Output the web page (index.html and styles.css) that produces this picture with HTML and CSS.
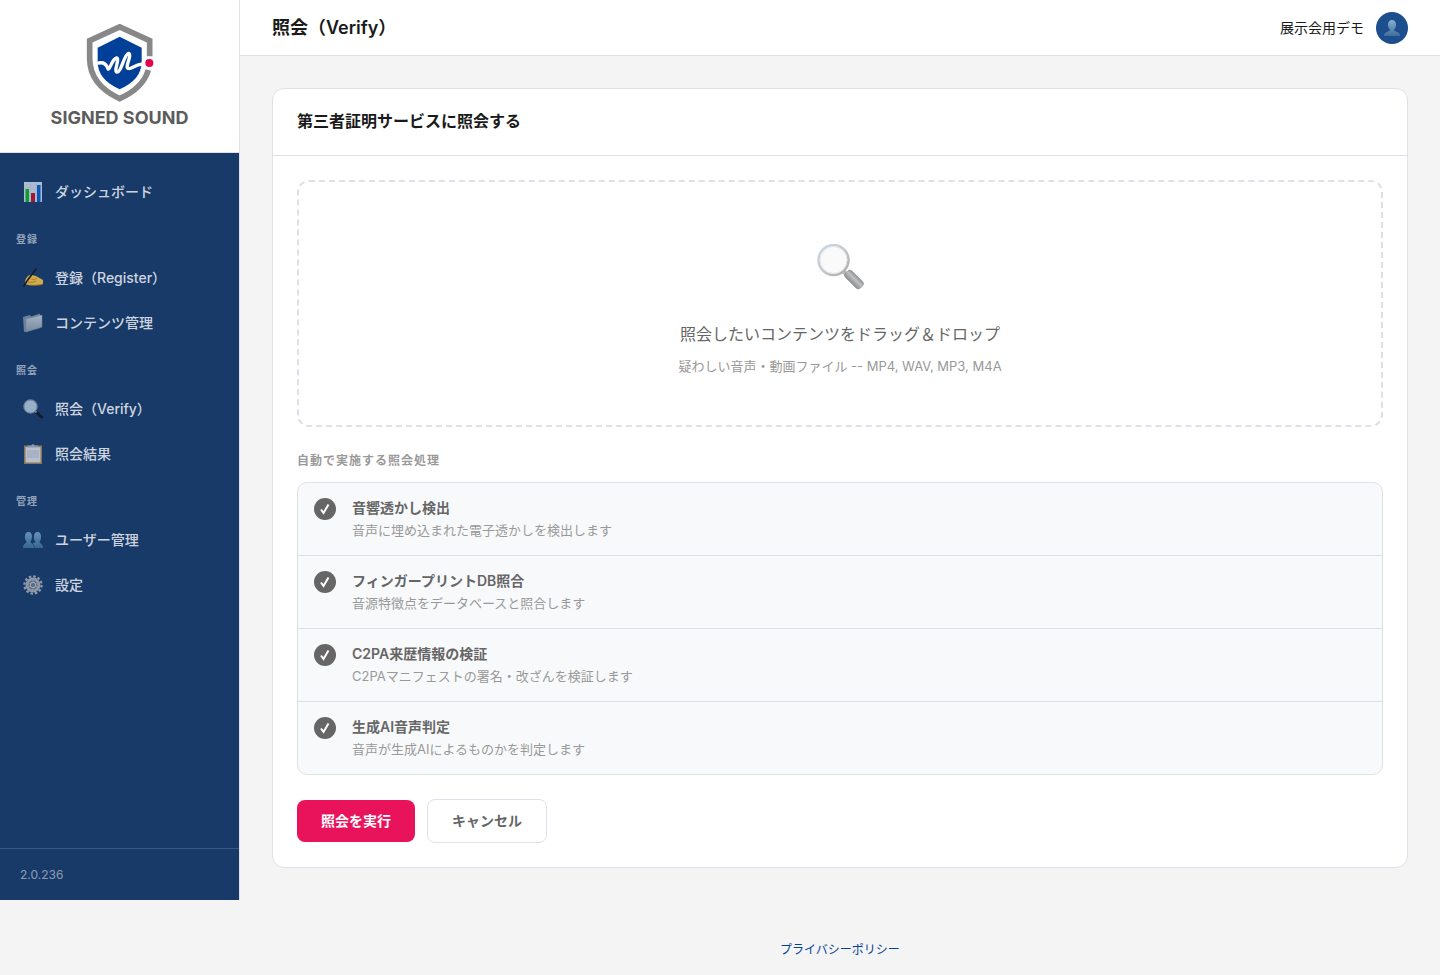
FILE: index.html
```html
<!DOCTYPE html>
<html lang="ja">

<head>
  <meta charset="UTF-8">
  <meta name="viewport" content="width=device-width, initial-scale=1.0">
  <title>照会（Verify） | SIGNED SOUND</title>
  <link rel="stylesheet" href="styles.css">
</head>

<body>
  <div class="layout">
    <aside class="sidebar">
      <a class="logo" href="#">
        <svg class="logo__mark" viewBox="120 42 240 234" aria-hidden="true">
          <path d="M329 139V92L239 50.500 149 92v53c0 56 31 94 90 121 46-21 75-48 86-86" fill="none" stroke="#888" stroke-width="17" />
          <path d="M239 80l66 33v42c0 37-23 63-66 83-43-20-66-46-66-83v-42z" fill="#004098" />
          <path d="M176 159c14-3 22 3 26 13 6 20 12-26 28-28 10 2-10 40 1 42 13 2 21-54 35-56 11 4-12 42-2 45 10 5 20-12 44-13" fill="none" stroke="#fff" stroke-width="10" stroke-linecap="round" stroke-linejoin="round" />
          <circle cx="328" cy="159" r="12" fill="#e6004d" />
        </svg>
        <span class="logo__name">SIGNED SOUND</span>
      </a>

      <nav class="nav">
        <a class="nav__item" href="#">
          <svg class="nav__icon" viewBox="0 0 20 20" aria-hidden="true">
            <path d="M1 0h18v20H1z" fill="#d3deeb" />
            <path d="M1 3h18M1 6h18M7.500 0v20M13 0v20" stroke="#c2cedb" stroke-width=".6" />
            <path d="M2.500 7H6v13H2.500z" fill="#09b51c" />
            <path d="M8 11h4v9H8z" fill="#c80f24" />
            <path d="M14 3h3.500v17H14z" fill="#075fd0" />
          </svg>
          ダッシュボード
        </a>

        <h2 class="nav__title">登録</h2>
        <a class="nav__item" href="#">
          <svg class="nav__icon" viewBox="0 0 20 20" aria-hidden="true">
            <path d="M2 15c0-4 2-7 5-8 3-1 3 1 6 1l7 4v4c-2 1-4 1-6 1H6c-2 0-4-1-4-2z" fill="#ffc944" />
            <path d="M8 11c3 1 4 0 6-1M5 14c3 1 6 0 8-1" fill="none" stroke="#bc781c" stroke-width=".8" />
            <path d="M6 17c5 .6 10 .4 14-1" fill="none" stroke="#c67b16" />
            <path d="M13 1L4 13l-3 5" fill="none" stroke="#171717" stroke-width="1.600" stroke-linecap="round" />
          </svg>
          登録（Register）
        </a>
        <a class="nav__item" href="#">
          <svg class="nav__icon" viewBox="0 0 20 20" aria-hidden="true">
            <path d="M0 4l7-2 1 1.500 9-3V15L1 19z" fill="#8194a6" />
            <path d="M3 6l16-4v12L3 19z" fill="url(#folder)" stroke="#8797a7" stroke-width=".5" />
            <defs>
              <linearGradient id="folder" x2="0" y2="1">
                <stop stop-color="#c8d2dc" />
                <stop offset="1" stop-color="#8e9dad" />
              </linearGradient>
            </defs>
          </svg>
          コンテンツ管理
        </a>

        <h2 class="nav__title">照会</h2>
        <a class="nav__item" href="#">
          <svg class="nav__icon" viewBox="0 0 20 20" aria-hidden="true">
            <path d="M12.500 12.500L18.500 18" stroke="#11151c" stroke-width="3" stroke-linecap="round" />
            <path d="M11 11l2.500 2.500" stroke="#8a8f96" stroke-width="2" />
            <circle cx="7.500" cy="7.500" r="6.600" fill="#b9cde3" stroke="#8c98a8" stroke-width="1.200" />
          </svg>
          照会（Verify）
        </a>
        <a class="nav__item" href="#">
          <svg class="nav__icon" viewBox="0 0 20 20" aria-hidden="true">
            <path d="M1 1.500h18V20H1z" fill="#a9834f" />
            <path d="M2.500 3h15v15.500h-15z" fill="#dfe2e8" />
            <path d="M4 6h12v8H4z" fill="#cdd1da" />
            <path d="M3.500 3.500L5 1.500h3.500C8.500-.2 11.500-.2 11.500 1.500H15l1.500 2z" fill="#a3b0c2" />
          </svg>
          照会結果
        </a>

        <h2 class="nav__title">管理</h2>
        <a class="nav__item" href="#">
          <svg class="nav__icon" viewBox="0 0 20 20" aria-hidden="true">
            <g fill="url(#people)">
              <path d="M5.500 2C8 2 9.200 4 9 7c-.1 2-.8 3.500-1.500 4.500 0 2 3 1.500 3.500 5.500v1H0v-1c.4-3.500 3.600-3.500 3.600-5.500C2.500 10.500 2 9 1.900 7 1.800 4 3 2 5.500 2z" />
              <path d="M14.500 2C17 2 18.200 4 18.100 7c-.1 2-.6 3.500-1.700 4.500 0 2 3.200 2 3.600 5.500v1h-8.500v-1c-.2-2.500-1.700-3-1.500-4 1-.5 2.500-.5 2.500-1.500C11.500 10.500 11 9 10.900 7 10.800 4 12 2 14.500 2z" />
            </g>
            <defs>
              <linearGradient id="people" x2="0" y2="1">
                <stop stop-color="#79a9cc" />
                <stop offset="1" stop-color="#416f9f" />
              </linearGradient>
            </defs>
          </svg>
          ユーザー管理
        </a>
        <a class="nav__item" href="#">
          <svg class="nav__icon" viewBox="0 0 20 20" aria-hidden="true">
            <circle cx="10" cy="10" r="8.600" fill="none" stroke="#aeb5be" stroke-width="2.200" stroke-dasharray="2.500 2" />
            <circle cx="10" cy="10" r="6" fill="#6c737c" stroke="#a8afb8" stroke-width="3" />
            <circle cx="10" cy="10" r="2.800" fill="#667c96" stroke="#cdd3da" />
            <path d="M10 5v2.500M10 12.500V15M5.500 8l2 1M12.500 11l2 1M5.500 12l2-1M12.500 9l2-1" stroke="#a8afb8" stroke-width=".8" />
          </svg>
          設定
        </a>
      </nav>

      <p class="sidebar__version">2.0.236</p>
    </aside>

    <div class="page">
      <header class="header">
        <h1 class="header__title">照会（Verify）</h1>
        <div class="user">
          <span>展示会用デモ</span>
          <span class="user__avatar">
            <svg viewBox="0 0 16 16" width="16" height="16" aria-hidden="true">
              <path d="M8 0c2.800 0 4.200 2 4 5-.1 2-.9 3.700-2 4.700 0 2.300 6 1.800 6 5.800v.5H0v-.5c0-4 6-3.500 6-5.800C4.900 8.700 4.100 7 4 5c-.2-3 1.200-5 4-5z" fill="url(#bust)" />
              <defs>
                <linearGradient id="bust" x2="0" y2="1">
                  <stop stop-color="#82b0d0" />
                  <stop offset="1" stop-color="#416d9d" />
                </linearGradient>
              </defs>
            </svg>
          </span>
        </div>
      </header>

      <main class="content">
        <form class="card">
          <h2 class="card__title">第三者証明サービスに照会する</h2>

          <div class="card__body">
            <label class="dropzone" for="file">
              <input class="dropzone__input" type="file" id="file" name="file" accept=".mp4,.wav,.mp3,.m4a">
              <svg class="dropzone__icon" viewBox="0 0 48 48" aria-hidden="true">
                <defs>
                  <linearGradient id="ring" x2="1" y2="1">
                    <stop stop-color="#c5d9ee" />
                    <stop offset=".45" stop-color="#c8cbce" />
                    <stop offset="1" stop-color="#aaa" />
                  </linearGradient>
                  <linearGradient id="handle" x2="0" y2="1">
                    <stop stop-color="#929496" />
                    <stop offset=".4" stop-color="#bfc1c3" />
                    <stop offset="1" stop-color="#8a8c8e" />
                  </linearGradient>
                </defs>
                <path d="M27 27l4 4" stroke="#b5b7b9" stroke-width="4" />
                <rect x="27.500" y="31" width="21" height="9" rx="3" fill="url(#handle)" stroke="#96989a" stroke-width=".8" transform="rotate(45 38 35.500)" />
                <circle cx="17.500" cy="16" r="15" fill="#fafafa" stroke="url(#ring)" stroke-width="2.500" />
                <circle cx="17.500" cy="16" r="13.500" fill="none" stroke="#e5e5e5" />
              </svg>
              <span class="dropzone__text">照会したいコンテンツをドラッグ＆ドロップ</span>
              <span class="dropzone__hint">疑わしい音声・動画ファイル -- MP4, WAV, MP3, M4A</span>
            </label>

            <h3 class="checks-title">自動で実施する照会処理</h3>
            <ul class="checks">
              <li class="checks__item">
                <svg class="checks__icon" viewBox="0 0 22 22" aria-hidden="true"><path d="M7 11.500l2.500 3.500L14.500 6.500" /></svg>
                <div>
                  <p class="checks__name">音響透かし検出</p>
                  <p class="checks__text">音声に埋め込まれた電子透かしを検出します</p>
                </div>
              </li>
              <li class="checks__item">
                <svg class="checks__icon" viewBox="0 0 22 22" aria-hidden="true"><path d="M7 11.500l2.500 3.500L14.500 6.500" /></svg>
                <div>
                  <p class="checks__name">フィンガープリントDB照合</p>
                  <p class="checks__text">音源特徴点をデータベースと照合します</p>
                </div>
              </li>
              <li class="checks__item">
                <svg class="checks__icon" viewBox="0 0 22 22" aria-hidden="true"><path d="M7 11.500l2.500 3.500L14.500 6.500" /></svg>
                <div>
                  <p class="checks__name">C2PA来歴情報の検証</p>
                  <p class="checks__text">C2PAマニフェストの署名・改ざんを検証します</p>
                </div>
              </li>
              <li class="checks__item">
                <svg class="checks__icon" viewBox="0 0 22 22" aria-hidden="true"><path d="M7 11.500l2.500 3.500L14.500 6.500" /></svg>
                <div>
                  <p class="checks__name">生成AI音声判定</p>
                  <p class="checks__text">音声が生成AIによるものかを判定します</p>
                </div>
              </li>
            </ul>

            <div class="actions">
              <button class="button button--primary" type="submit">照会を実行</button>
              <button class="button button--secondary" type="button">キャンセル</button>
            </div>
          </div>
        </form>
      </main>
    </div>
  </div>

  <footer class="footer">
    <a class="footer__link" href="#">プライバシーポリシー</a>
  </footer>
</body>

</html>
```
FILE: styles.css
```css
* {
  box-sizing: border-box;
}

body {
  display: flex;
  flex-direction: column;
  min-height: 100vh;
  margin: 0;
  background-color: #f4f4f4;
  color: #1a1a1a;
  font-family: Inter, "Noto Sans CJK JP", sans-serif;
  font-size: 14px;
  line-height: 22px;
}

h1,
h2,
h3,
p,
ul {
  margin: 0;
  padding: 0;
}

a {
  text-decoration: none;
}

.layout {
  display: flex;
  flex: 1;
}

/* Sidebar */

.sidebar {
  display: flex;
  flex: none;
  flex-direction: column;
  width: 240px;
  border-right: 1px solid #e0e0ea;
  background-color: #173a69;
}

.logo {
  display: flex;
  flex-direction: column;
  align-items: center;
  gap: 5px;
  padding: 24px 0 23px;
  border-bottom: 1px solid #e0e0ea;
  background-color: #fff;
  color: #5c5c5c;
}

.logo__mark {
  width: 80px;
  height: 78px;
}

.logo__name {
  font-size: 18px;
  font-weight: 700;
}

.nav {
  flex: 1;
  padding: 17px 8px;
}

.nav__title {
  padding: 16px 8px 9px;
  color: rgba(255, 255, 255, 0.55);
  font-size: 10px;
  font-weight: 600;
  letter-spacing: 1px;
  line-height: 16px;
}

.nav__item {
  display: flex;
  align-items: center;
  gap: 12px;
  margin-bottom: 2px;
  padding: 12px 15px;
  border-radius: 8px;
  color: rgba(255, 255, 255, 0.8);
  font-weight: 500;
  line-height: 19px;
}

.nav__item:hover {
  background-color: rgba(255, 255, 255, 0.08);
}

.nav__icon {
  flex: none;
  width: 20px;
  height: 20px;
  margin: -1px 0;
  opacity: 0.8;
}

.sidebar__version {
  padding: 16px 20px;
  border-top: 1px solid rgba(255, 255, 255, 0.15);
  color: rgba(255, 255, 255, 0.5);
  font-size: 12px;
  line-height: 19px;
}

/* Header */

.page {
  flex: 1;
  min-width: 0;
}

.header {
  display: flex;
  align-items: center;
  justify-content: space-between;
  padding: 12px 32px 11px;
  border-bottom: 1px solid #e0e0ea;
  background-color: #fff;
}

.header__title {
  font-size: 18px;
  font-weight: 600;
}

.user {
  display: flex;
  align-items: center;
  gap: 12px;
}

.user__avatar {
  display: flex;
  align-items: center;
  justify-content: center;
  width: 32px;
  height: 32px;
  border-radius: 50%;
  background-color: #1d4f8f;
}

/* Card */

.content {
  padding: 32px;
}

.card {
  border: 1px solid #e0e0ea;
  border-radius: 12px;
  background-color: #fff;
}

.card__title {
  padding: 19px 24px 21px;
  border-bottom: 1px solid #e0e0ea;
  font-size: 16px;
  font-weight: 600;
  line-height: 26px;
}

.card__body {
  padding: 24px;
}

.dropzone {
  display: flex;
  flex-direction: column;
  align-items: center;
  padding: 48px;
  border: 2px dashed #e0e0ea;
  border-radius: 12px;
  text-align: center;
  cursor: pointer;
}

.dropzone:hover,
.dropzone:focus-within {
  border-color: #173a69;
}

.dropzone__input {
  position: absolute;
  width: 1px;
  height: 1px;
  opacity: 0;
}

.dropzone__icon {
  width: 48px;
  height: 48px;
  margin: 14px 0 30px;
}

.dropzone__text {
  margin-bottom: 10px;
  color: #666;
  font-size: 16px;
  line-height: 24px;
}

.dropzone__hint {
  color: #999;
  font-size: 13px;
  line-height: 21px;
}

.checks-title {
  margin: 24px 0 12px;
  color: #999;
  font-size: 12px;
  font-weight: 600;
  letter-spacing: 1px;
  line-height: 19px;
}

.checks {
  border: 1px solid #e0e0ea;
  border-radius: 10px;
  background-color: #f8f9fb;
  list-style: none;
}

.checks__item {
  display: flex;
  align-items: flex-start;
  gap: 16px;
  padding: 14px 16px;
}

.checks__item + .checks__item {
  border-top: 1px solid #e0e0ea;
}

.checks__icon {
  flex: none;
  width: 22px;
  height: 22px;
  margin-top: 1px;
  border-radius: 50%;
  background-color: #666;
  fill: none;
  stroke: #fff;
  stroke-width: 2;
}

.checks__name {
  color: #666;
  font-weight: 600;
}

.checks__text {
  color: #999;
  font-size: 13px;
}

.actions {
  display: flex;
  align-items: center;
  gap: 12px;
  margin-top: 24px;
}

.button {
  margin: 0;
  padding: 10px 24px;
  border: none;
  border-radius: 8px;
  font-family: inherit;
  font-size: 14px;
  font-weight: 600;
  line-height: 22px;
  cursor: pointer;
}

.button--primary {
  background-color: #e8135b;
  color: #fff;
}

.button--secondary {
  border: 1px solid #e0e0ea;
  background-color: #fff;
  color: #666;
}

/* Footer */

.footer {
  padding: 40px 0 16px 240px;
  font-size: 12px;
  line-height: 19px;
  text-align: center;
}

.footer__link {
  color: #004098;
}
```
